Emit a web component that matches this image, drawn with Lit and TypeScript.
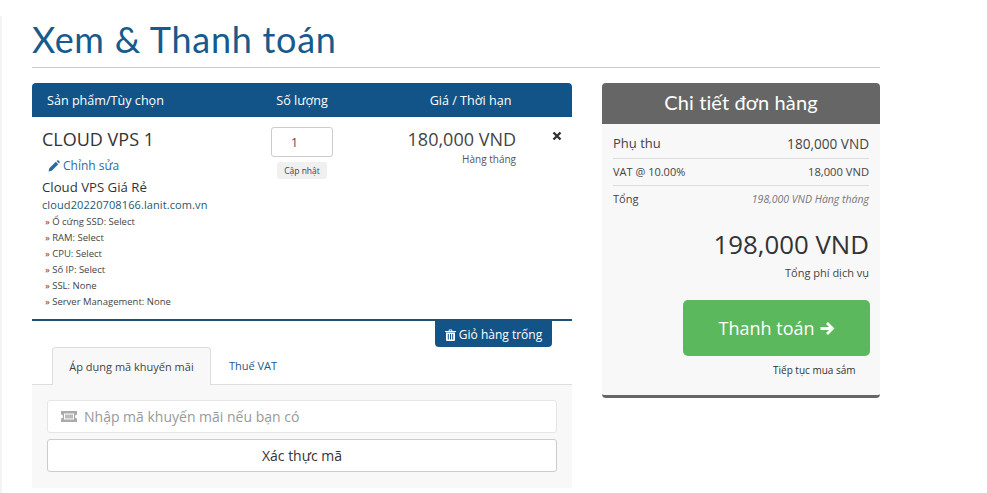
import { LitElement, html, css } from "lit";
import { customElement } from "lit/decorators.js";

@customElement("app-root")
export class AppRoot extends LitElement {
  static styles = css`
    :host { display: block; height: 493px; overflow: hidden; background: #fff; font-family: "Open Sans", sans-serif; color: #333; box-sizing: border-box; position: relative; }
    * { box-sizing: border-box; }
    .stripe { position: absolute; left: 0; top: 16px; bottom: 0; width: 2px; background: #f4f4f4; }
    .page { width: 848px; margin-left: 32px; }
    h1 { margin: 0; height: 68px; padding-top: 15px; font: 400 36px/48px Lato, sans-serif; color: #175a8c; border-bottom: 1px solid #ccc; letter-spacing: .72px; }
    .cols { display: grid; grid-template-columns: 540px 278px; gap: 30px; margin-top: 15px; }
    .head { display: grid; grid-template-columns: 203px 134px 1fr; height: 34px; background: #125488; color: #fff; border-radius: 4px 4px 0 0; font-size: 12.6px; font-weight: 500; align-items: center; text-align: center; }
    .head span:first-child { text-align: left; padding-left: 15px; }
    .item { display: grid; grid-template-columns: 203px 134px 1fr; height: 204px; border-bottom: 2px solid #1d5078; position: relative; }
    .info { padding: 10px 0 0 10px; }
    .name { font-size: 18px; line-height: 24px; color: #333; }
    .edit { font-size: 12px; line-height: 16px; color: #2f6a9c; margin: 7px 0 0 6px; display: flex; align-items: center; gap: 3px; }
    .prod { font-size: 13.2px; line-height: 16px; margin-top: 5px; }
    .dom { font-size: 11px; line-height: 16px; color: #1d5a6e; margin-top: 2px; letter-spacing: .1px; }
    .opt { font-size: 9.5px; line-height: 16px; color: #444; padding-left: 3px; }
    .opts { margin-top: 1px; }
    .qty { display: flex; flex-direction: column; align-items: center; padding: 10px 0 0 0; }
    .qty .inp { width: 62px; height: 30px; border: 1px solid #ccc; border-radius: 3px; font-size: 13px; color: #555; display: flex; align-items: center; justify-content: center; margin-right: 1px; padding-right: 14px; }
    .upd { margin-top: 5px; width: 50px; height: 17px; border-radius: 3px; background: #f0f0f0; font-size: 8.5px; line-height: 17px; text-align: center; color: #444; }
    .price { text-align: right; padding: 11px 56px 0 0; position: relative; }
    .price b { display: block; font-weight: 400; font-size: 18px; line-height: 22px; color: #444; }
    .price small { display: block; font-size: 10px; line-height: 14px; color: #555; margin-top: 2px; }
    .x { position: absolute; right: 10px; top: 14px; width: 10px; height: 10px; }
    .emptywrap { display: flex; justify-content: flex-end; padding-right: 20px; margin-top: -1px; }
    .empty { height: 27px; width: 117px; padding-top: 2px; background: #125488; color: #fff; border-radius: 0 0 4px 4px; font-size: 12px; font-weight: 500; display: flex; align-items: center; justify-content: center; gap: 3px; }
    .tabs { display: flex; padding-left: 20px; height: 38px; margin-top: 0; border-bottom: 1px solid #ddd; }
    .tab { height: 38px; width: 159px; font-size: 11px; line-height: 37px; text-align: center; background: #f8f8f8; border: 1px solid #ddd; border-bottom: none; border-radius: 4px 4px 0 0; color: #444; }
    .tab.link { background: none; border: none; width: 66px; margin-left: 9px; color: #1a5a8a; }
    .tabbody { background: #f8f8f8; height: 103px; padding: 15px 15px 0; }
    .field { height: 33px; background: #fff; border: 1px solid #e6e6e6; border-radius: 3px; display: flex; align-items: center; padding-left: 13px; gap: 7px; color: #999; font-size: 14px; }
    .btn { height: 33px; margin-top: 6px; background: #fff; border: 1px solid #ccc; border-radius: 3px; display: flex; align-items: center; justify-content: center; font-size: 14px; color: #333; }
    .side { height: 315px; background: #f8f8f8; border-radius: 4px; border-bottom: 3px solid #666; }
    .side h2 { margin: 0; height: 41px; background: #666; color: #fff; border-radius: 4px 4px 0 0; font: 400 20px/39px Lato, sans-serif; letter-spacing: .1px; text-align: center; }
    .rows { padding: 6px 11px 0 11px; }
    .row { display: flex; justify-content: space-between; align-items: center; height: 27px; padding-bottom: 2px; border-bottom: 1px solid #ddd; font-size: 13px; color: #444; }
    .row.f { height: 29px; }
    .row span + span { font-size: 13.6px; }
    .row.s { font-size: 11px; }
    .row.s span + span { font-size: 11.2px; }
    .row.t { border: none; font-size: 11px; }
    .row.t i { font-size: 10.5px; color: #777; }
    .total { text-align: right; padding: 0 11px 0 0; margin-top: 14px; }
    .total b { display: block; font-weight: 400; font-size: 25.8px; line-height: 34px; color: #333; }
    .total small { display: block; font-size: 11px; line-height: 14px; color: #444; margin-top: 5px; }
    .pay { margin: 20px 10px 0 81px; height: 56px; background: #5cb85c; border-radius: 5px; color: #fff; font-size: 18px; font-weight: 500; display: flex; align-items: center; justify-content: center; gap: 4px; }
    .cont { margin: 7px 0 0 171px; font-size: 10px; line-height: 14px; color: #333; }
  `;
  render() {
    const opts = ["Ổ cứng SSD: Select", "RAM: Select", "CPU: Select", "Số IP: Select", "SSL: None", "Server Management: None"];
    return html`
      <div class="stripe"></div>
      <div class="page">
        <h1>Xem &amp; Thanh toán</h1>
        <div class="cols">
          <div>
            <div class="head"><span>Sản phẩm/Tùy chọn</span><span>Số lượng</span><span>Giá / Thời hạn</span></div>
            <div class="item">
              <div class="info">
                <div class="name">CLOUD VPS 1</div>
                <div class="edit">
                  <svg width="12" height="12" viewBox="0 0 12 12"><path fill="#2f6a9c" d="M0.5 11.5 1.3 8.2 7.8 1.7 10.3 4.2 3.8 10.7ZM8.5 1 9.2.4c.4-.3.9-.3 1.2 0l1.2 1.2c.3.3.3.8 0 1.2L11 3.5Z"/></svg>
                  Chỉnh sửa
                </div>
                <div class="prod">Cloud VPS Giá Rẻ</div>
                <div class="dom">cloud20220708166.lanit.com.vn</div>
                <div class="opts">${opts.map((o) => html`<div class="opt">» ${o}</div>`)}</div>
              </div>
              <div class="qty"><div class="inp">1</div><div class="upd">Cập nhật</div></div>
              <div class="price">
                <b>180,000 VND</b><small>Hàng tháng</small>
                <svg class="x" viewBox="0 0 10 10"><path d="M1.5 1.5 8.5 8.5M8.5 1.5 1.5 8.5" stroke="#333" stroke-width="2.4"/></svg>
              </div>
            </div>
            <div class="emptywrap">
              <div class="empty">
                <svg width="11" height="12" viewBox="0 0 11 12"><path fill="#fff" d="M0 2h11v1H0ZM3.5 2l.6-1.6h2.8L7.500 2h-1L6.200 1.200H4.800L4.500 2ZM1 3.500h9V11a1 1 0 0 1-1 1H2a1 1 0 0 1-1-1ZM2.800 5v5.500h1V5ZM5 5v5.500h1V5ZM7.200 5v5.500h1V5Z" fill-rule="evenodd"/></svg>
                Giỏ hàng trống
              </div>
            </div>
            <div class="tabs"><div class="tab">Áp dụng mã khuyến mãi</div><div class="tab link">Thuế VAT</div></div>
            <div class="tabbody">
              <div class="field">
                <svg width="16" height="11" viewBox="0 0 16 11"><path fill="#aaa" fill-rule="evenodd" d="M0 0h16v3.500a2 2 0 0 0 0 4V11H0V7.500a2 2 0 0 0 0-4ZM3 2.500v6h10v-6Z"/><path fill="#bbb" d="M4 3.500h8v4H4Z"/></svg>
                Nhập mã khuyến mãi nếu bạn có
              </div>
              <div class="btn">Xác thực mã</div>
            </div>
          </div>
          <div class="side">
            <h2>Chi tiết đơn hàng</h2>
            <div class="rows">
              <div class="row f"><span>Phụ thu</span><span>180,000 VND</span></div>
              <div class="row s"><span>VAT @ 10.00%</span><span>18,000 VND</span></div>
              <div class="row t"><span>Tổng</span><i>198,000 VND Hàng tháng</i></div>
            </div>
            <div class="total"><b>198,000 VND</b><small>Tổng phí dịch vụ</small></div>
            <div class="pay">Thanh toán
              <svg width="16" height="15" viewBox="0 0 16 15"><path d="M1.500 7.500H13M8 2l5.500 5.500L8 13" fill="none" stroke="#fff" stroke-width="2.800"/></svg>
            </div>
            <div class="cont">Tiếp tục mua sắm</div>
          </div>
        </div>
      </div>
    `;
  }
}
